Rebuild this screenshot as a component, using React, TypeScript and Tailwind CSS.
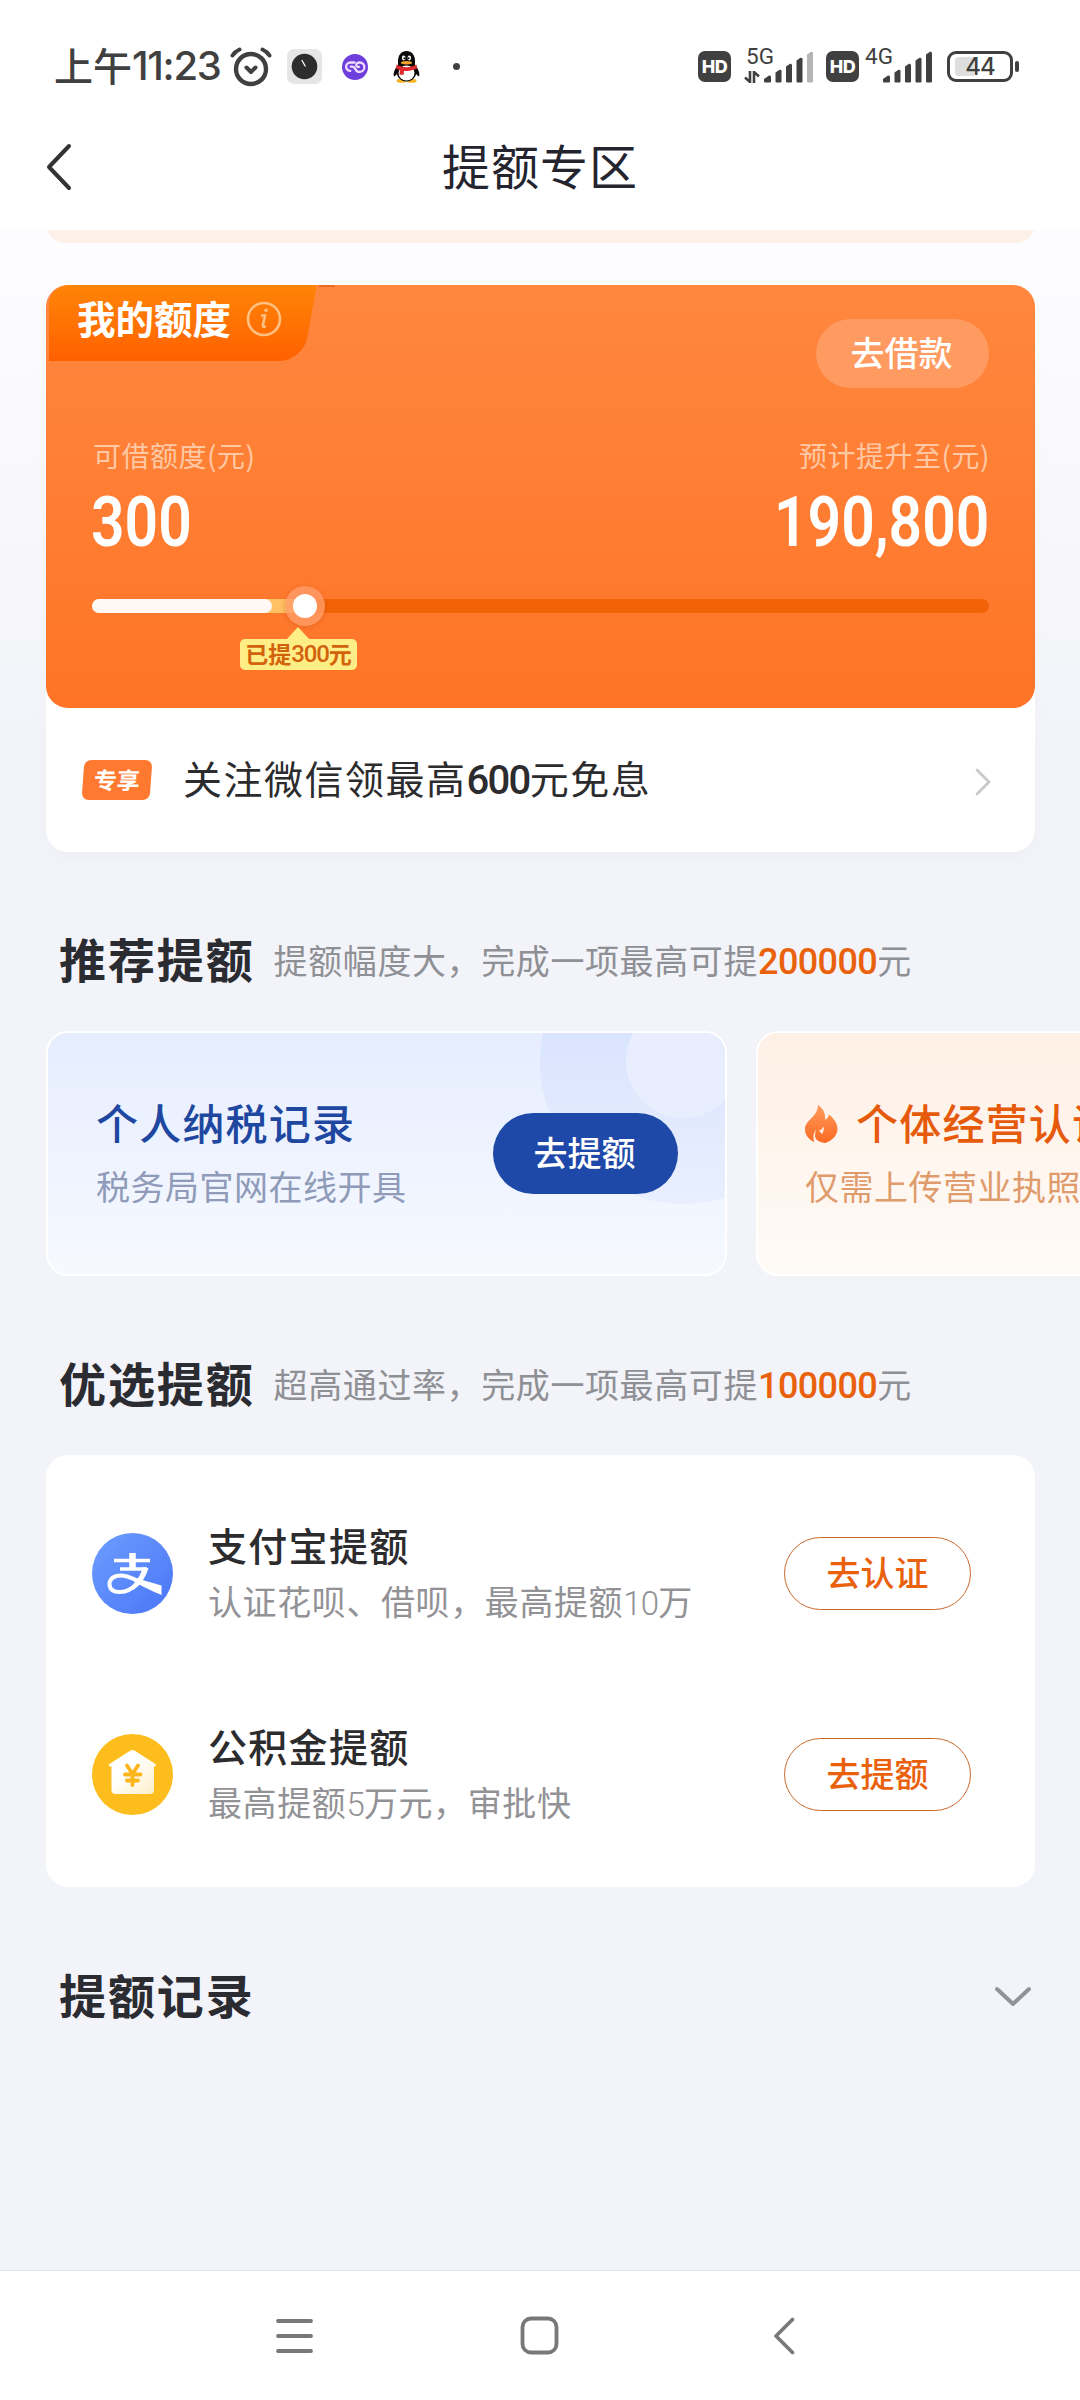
import type { ReactNode } from "react";
import clsx from "clsx";

const offers = [
  { id: "alipay", title: "支付宝提额", desc: ["认证花呗、借呗，最高提额", "10", "万"], action: "去认证" },
  { id: "fund", title: "公积金提额", desc: ["最高提额", "5", "万元，审批快"], action: "去提额" },
];

function AlarmIcon() {
  return (
    <svg width="42" height="40" viewBox="0 0 42 40" fill="none" stroke="#404040" strokeLinecap="round" strokeLinejoin="round">
      <circle cx="21" cy="22" r="15" strokeWidth="4.4" />
      <path d="M16.500 20.500 21 25l4.500-4.500" strokeWidth="4" />
      <path d="M2.500 8.500Q5 4.500 9.500 2.500M39.500 8.500Q37 4.500 32.500 2.500" strokeWidth="4" />
    </svg>
  );
}

function ClockAppIcon() {
  return (
    <svg width="35" height="35" viewBox="0 0 35 35">
      <rect width="35" height="35" rx="7" fill="#e6e6e6" />
      <circle cx="17.500" cy="17.500" r="12.800" fill="#2d2d2d" />
      <path d="M15 11.500l3.200 5.500" stroke="#fff" strokeWidth="1.300" strokeLinecap="round" />
    </svg>
  );
}

function LoopAppIcon() {
  return (
    <svg width="26" height="26" viewBox="0 0 26 26" fill="none">
      <circle cx="13" cy="13" r="13" fill="#6e3fdc" />
      <path
        d="M12.500 8.500H8.300a4.200 4.200 0 0 0 0 8.400M8.800 12.700h1.700c3.300 0 2.500 5.200 6.500 5.200h.700a4.700 4.700 0 0 0 0-9.400c-2.200 0-3.400 1-3.400 2.400s1.200 2 2.700 2"
        stroke="#f0dcff"
        strokeWidth="2.300"
        strokeLinecap="round"
      />
    </svg>
  );
}

function PenguinIcon() {
  return (
    <svg width="27" height="32" viewBox="0 0 27 32">
      <ellipse cx="8.500" cy="29.800" rx="5" ry="2" fill="#f6b323" />
      <ellipse cx="18.500" cy="29.800" rx="5" ry="2" fill="#f6b323" />
      <path d="M5 14C1.500 18 0 22 .8 25c.6 1 2-.5 3-2C5 27.500 9 30.500 13.500 30.500S22 27.500 23.200 23c1 1.500 2.400 3 3 2 .8-3-.700-7-4.200-11z" fill="#0b0b0b" />
      <path d="M5 14.500V10C5 4 8.500 0 13.500 0S22 4 22 10v4.500z" fill="#0b0b0b" />
      <ellipse cx="13.500" cy="22" rx="8" ry="7.500" fill="#fff" />
      <ellipse cx="10.700" cy="7" rx="1.800" ry="2.400" fill="#fff" />
      <ellipse cx="16.300" cy="7" rx="1.800" ry="2.400" fill="#fff" />
      <circle cx="11.400" cy="7.300" r="1" fill="#000" />
      <circle cx="15.600" cy="7.300" r="1" fill="#000" />
      <ellipse cx="13.500" cy="11.800" rx="5.600" ry="1.700" fill="#f6a32b" />
      <path d="M3.600 13.500c6 3.500 14 3.500 19.800 0l.8 3.800c-4.500 2.500-9 3-13.200 2.500l-.3 4H6.500l.4-4.800c-1.500-.4-2.800-1-4-1.800z" fill="#e02a2f" />
    </svg>
  );
}

function HdBadge() {
  return (
    <span className="flex h-[31px] w-[33px] items-center justify-center rounded-[7px] bg-[#404040] font-[Inter,sans-serif] text-[18px] leading-none font-extrabold tracking-[-0.500px] text-white">
      HD
    </span>
  );
}

function SignalBars({ weak = false }: { weak?: boolean }) {
  return (
    <svg width="50" height="32" viewBox="0 0 50 32" fill="#404040">
      <path d="M0 28l5-3.500q2-.5 2 1.500v4.500q0 1-1 1H1q-1 0-1-1z" />
      <path d="M11.500 21.500l4-2.700q2-.5 2 1.500v10.200q0 1-1 1h-4q-1 0-1-1z" />
      <path d="M22 15.500l4-2.700q2-.5 2 1.500v16.200q0 1-1 1h-4q-1 0-1-1z" />
      <path d="M32.500 9.500l4-2.700q2-.5 2 1.500v22.200q0 1-1 1h-4q-1 0-1-1z" />
      <path d="M43 3.500l4-2.700q2-.5 2 1.500v28.200q0 1-1 1h-4q-1 0-1-1z" fill={weak ? "#b5b5b5" : "#404040"} />
    </svg>
  );
}

function StatusBar() {
  return (
    <div className="flex h-[133px] items-center pr-[61px] pl-[54px] text-[#404040]">
      <span className="-mt-[4px] flex w-[170px] items-center text-[39px] leading-none font-medium whitespace-nowrap">
        上午
        <span className="mt-[2px] font-[Inter,sans-serif] text-[40px] tracking-[-1.300px]">11:23</span>
      </span>
      <span className="ml-[6px]"><AlarmIcon /></span>
      <span className="ml-[15px]"><ClockAppIcon /></span>
      <span className="ml-[20px]"><LoopAppIcon /></span>
      <span className="ml-[25px]"><PenguinIcon /></span>
      <span className="ml-[33px] size-[7px] rounded-full bg-[#404040]" />

      <div className="ml-auto flex items-center">
        <HdBadge />
        <div className="relative ml-[33px]">
          <SignalBars weak />
          <span className="absolute -top-[6px] -left-[18px] font-[Roboto,sans-serif] text-[22.500px] leading-none">5G</span>
          <svg className="absolute top-[20px] -left-[20px]" width="16" height="12" viewBox="0 0 16 12" fill="none" stroke="#404040" strokeWidth="2.600">
            <path d="M6 0v11L1 6.500M10 12V1l5 4.500" />
          </svg>
        </div>
        <span className="ml-[12px]"><HdBadge /></span>
        <div className="relative ml-[24px]">
          <SignalBars />
          <span className="absolute -top-[6px] -left-[18px] font-[Roboto,sans-serif] text-[22.500px] leading-none">4G</span>
        </div>
        <div className="relative ml-[14px] flex h-[31px] w-[66px] items-center justify-center rounded-[9px] border-[3px] border-[#404040]">
          <span className="absolute top-[3px] bottom-[3px] left-[5px] w-[19px] rounded-l-[4px] bg-[#dedede]" />
          <span className="relative font-[Inter,sans-serif] text-[24px] leading-none font-medium tracking-[-1px]">44</span>
        </div>
        <span className="ml-[2px] h-[11px] w-[4px] rounded-[2px] bg-[#404040]" />
      </div>
    </div>
  );
}

function Num({ children, className }: { children: ReactNode; className?: string }) {
  return <span className={clsx("font-[Roboto,sans-serif]", className)}>{children}</span>;
}

function CreditCard() {
  return (
    <div className="rounded-[22px] bg-white shadow-[0_8px_16px_rgba(40,40,80,0.02)]">
      <div className="h-[423px] rounded-[22px] bg-linear-to-b from-[#ff873e] to-[#ff7426]">
        <div className="flex h-[103px] items-start justify-between pr-[46px]">
          <div className="relative ml-[3px] flex h-[76px] w-[286px] items-center overflow-hidden rounded-tl-[20px] pb-[8px] pl-[28px]">
            <span className="absolute top-0 left-[270px] h-[2px] w-[16px] bg-[#ea6c20]" />
            <span className="absolute top-0 -left-[20px] h-[76px] w-[281px] -skew-x-[10deg] rounded-br-[24px] bg-linear-to-b from-[#ff8407] to-[#ff6000]" />
            <span className="relative -mt-[4px] text-[38.500px] leading-none font-bold text-white">我的额度</span>
            <svg className="relative ml-[15px]" width="36" height="36" viewBox="0 0 36 36" fill="none" stroke="#ffc081" strokeLinecap="round">
              <circle cx="18" cy="18" r="16" strokeWidth="2.600" />
              <path d="M16 14.500h3l-2.200 10q-.2 1.800 2 1" strokeWidth="2.600" />
              <circle cx="20" cy="9.300" r="1.800" fill="#ffc081" stroke="none" />
            </svg>
          </div>
          <button className="mt-[34px] h-[69px] w-[173px] rounded-full bg-[#ff9a60] pr-[2px] pb-[3px] text-[34px] leading-none font-medium text-white">
            去借款
          </button>
        </div>

        <div className="mt-[47px] flex h-[40px] items-center justify-between pr-[45px] pl-[47px] text-[28px] tracking-[0.500px] text-[#ffc8a4]">
          <span>可借额度(元)</span>
          <span>预计提升至(元)</span>
        </div>
        <div className="mt-[17px] flex h-[60px] items-center justify-between pr-[46px] pl-[45px] text-[70px] leading-none font-semibold text-white">
          <Num className="origin-left scale-x-[0.84]">300</Num>
          <Num className="origin-right scale-x-[0.84]">190,800</Num>
        </div>

        <div className="relative mx-[46px] mt-[47px] h-[14px] rounded-full bg-[#f26207]">
          <div className="h-full w-[212px] rounded-l-full bg-[#ffc163]">
            <div className="h-full w-[180px] rounded-full bg-[#fff8f5]" />
          </div>
          <span className="absolute -top-[13px] left-[193px] size-[40px] rounded-full bg-[#ff9c68]/80 shadow-[0_1px_5px_rgba(180,70,0,0.35)]" />
          <span className="absolute -top-[5px] left-[201px] size-[24px] rounded-full bg-white" />
          <span className="absolute top-[28px] left-[194px] border-x-[12px] border-b-[13px] border-x-transparent border-b-[#ffed86]" />
          <span className="absolute top-[40px] left-[148px] flex h-[31px] w-[117px] items-center justify-center rounded-[5px] bg-[#ffed86] pb-[2px] text-[23px] leading-none font-bold whitespace-nowrap text-[#d2620c]">
            已提<Num className="text-[24px] font-medium tracking-[-1.200px]">300</Num>元
          </span>
        </div>
      </div>

      <div className="flex h-[144px] items-center pr-[44px] pl-[37px]">
        <span className="flex h-[40px] w-[68px] -skew-x-[4deg] items-center justify-center rounded-[7px] bg-[#ff7a30] pb-[2px] text-[23px] leading-none font-bold text-white">
          专享
        </span>
        <p className="ml-[32px] pb-[2px] text-[39px] leading-none tracking-[1.500px] text-[#2c2c2e]">
          关注微信领最高<Num className="text-[40px] font-medium tracking-[-1.700px]">600</Num>元免息
        </p>
        <svg className="ml-auto mt-[3px]" width="16" height="28" viewBox="0 0 16 28" fill="none" stroke="#c9c9cc" strokeWidth="2.800" strokeLinecap="round" strokeLinejoin="round">
          <path d="M2 2l12 12L2 26" />
        </svg>
      </div>
    </div>
  );
}

function SectionHeading({ title, hint, amount }: { title: string; hint: string; amount: string }) {
  return (
    <div className="flex h-[60px] items-center pl-[13px] leading-none whitespace-nowrap">
      <h2 className="-mt-[5px] text-[47px] font-bold tracking-[1.900px] text-[#2b2b32]">{title}</h2>
      <p className="mt-[3px] ml-[19px] text-[34px] tracking-[0.600px] text-[#8f9095]">
        {hint}
        <Num className="text-[36px] font-medium tracking-[-0.600px] text-[#ea610d]">{amount}</Num>元
      </p>
    </div>
  );
}

function RecommendCards() {
  return (
    <div className="mt-[41px] -mr-[45px] flex gap-[29px] overflow-hidden">
      <div className="relative flex h-[245px] w-[681px] shrink-0 items-center justify-between overflow-hidden rounded-[22px] border-[2px] border-white bg-linear-to-b from-[#e6edfe] to-[#f6f9ff] pr-[47px] pl-[48px]">
        <svg className="absolute top-0 right-0" width="189" height="176" viewBox="0 0 189 176">
          <defs>
            <linearGradient id="ring" x1="0" y1="0" x2="0" y2="1">
              <stop offset="0.400" stopColor="#dae4fe" />
              <stop offset="1" stopColor="#e9effe" />
            </linearGradient>
          </defs>
          <circle cx="147" cy="28" r="143" fill="url(#ring)" />
          <circle cx="147" cy="28" r="57" fill="#e8eefe" />
        </svg>
        <div className="mt-[2px] whitespace-nowrap">
          <div className="text-[42px] leading-[62px] font-medium tracking-[1.200px] text-[#20479f]">个人纳税记录</div>
          <div className="text-[34px] leading-[66px] tracking-[0.500px] text-[#8f9bb9]">税务局官网在线开具</div>
        </div>
        <button className="relative h-[81px] w-[185px] rounded-full bg-[#1f49a8] pr-[2px] pb-[4px] text-[34px] leading-none font-medium text-white">
          去提额
        </button>
      </div>

      <div className="flex h-[245px] w-[681px] shrink-0 items-center rounded-[22px] border-[2px] border-white bg-linear-to-b from-[#fef0e5] to-[#fffbf7] pl-[47px]">
        <div className="mt-[2px] whitespace-nowrap">
          <div className="flex items-center text-[42px] leading-[62px] font-medium tracking-[1.200px] text-[#e65a0b]">
            <svg className="mt-[5px] mr-[18px]" width="33" height="38" viewBox="0 0 33 38">
              <defs>
                <linearGradient id="flame" x1="0" y1="0" x2="0" y2="1">
                  <stop stopColor="#ff9a5c" />
                  <stop offset="1" stopColor="#fb6a22" />
                </linearGradient>
              </defs>
              <path
                d="M13 0c6 4 7.500 9 7 15 2-1 3.500-3 4-5.500 5 4 8.500 9 8.500 14.500 0 6-4.500 11-12 14-6-.5-10.500-3-10.500-7.500 0-2 .4-4 1-6-2.500 3.500-3.500 8-1.500 12.500C3.500 34.500 0 30 0 24 0 15 12.500 12.500 13 0z"
                fill="url(#flame)"
              />
              <path d="M18.500 21.500c1 3.500-.5 5.500-1.500 8-.8-1.800-1.800-2.800-3.500-3.500 2-1 4-2.500 5-4.500z" fill="#fef0e7" />
            </svg>
            个体经营认证
          </div>
          <div className="text-[34px] leading-[66px] tracking-[0.500px] text-[#e09b6c]">仅需上传营业执照</div>
        </div>
      </div>
    </div>
  );
}

function AlipayIcon() {
  return (
    <svg width="81" height="81" viewBox="0 0 81 81" fill="none">
      <defs>
        <linearGradient id="alipay" x1="0" y1="0" x2="1" y2="1">
          <stop stopColor="#6d9dff" />
          <stop offset="1" stopColor="#4a76f6" />
        </linearGradient>
      </defs>
      <circle cx="40.500" cy="40.500" r="40.500" fill="url(#alipay)" />
      <path d="M22 27.500h36M28 36h27" stroke="#fff" strokeWidth="3.600" />
      <path d="M40.500 20v16" stroke="#fff" strokeWidth="6.500" />
      <path d="M53.500 34.500C50 45 42 59 28 59c-7.500 0-10.500-3.500-10.500-8 0-5 4.500-8.500 11-8.500 8 0 14 4 22 7.500" stroke="#fff" strokeWidth="4" />
      <path d="M45 45.500l24.500 7V62C62 59 52 54 42 49z" fill="#fff" />
      <path d="M56.500 35C54 44 48 53 41 57l-1.500-3C45 49 49 41 50.500 35z" fill="#fff" />
    </svg>
  );
}

function FundIcon() {
  return (
    <svg width="81" height="81" viewBox="0 0 81 81" fill="none">
      <defs>
        <linearGradient id="house" x1="0" y1="0" x2="1" y2="1">
          <stop offset="0.400" stopColor="#fff" />
          <stop offset="1" stopColor="#ffeec6" />
        </linearGradient>
      </defs>
      <circle cx="40.500" cy="40.500" r="40.500" fill="#fdbd1d" />
      <path d="M38.500 16.500q2-1.200 4 0L63.500 30q1.500 2-1 2.500h-.500V56q0 4-4 4H23.500q-4 0-4-4V32.500h-1q-3-.5-1-2.500z" fill="url(#house)" />
      <path d="M35 31.500l5.500 8.500 5.500-8.500M40.500 40v11M33 40.500h15.500M35 46.500h11" stroke="#fdb51c" strokeWidth="3.800" strokeLinecap="round" />
    </svg>
  );
}

function OfferList() {
  return (
    <div className="mt-[41px] h-[432px] rounded-[22px] bg-white pt-[18px] pr-[64px] pl-[46px]">
      {offers.map((o) => (
        <div key={o.id} className="flex h-[201px] items-center whitespace-nowrap">
          {o.id === "alipay" ? <AlipayIcon /> : <FundIcon />}
          <div className="mt-[2px] ml-[35px]">
            <div className="text-[39px] leading-[56px] font-medium tracking-[1.300px] text-[#2c2c2f]">{o.title}</div>
            <div className="text-[34px] leading-[58px] tracking-[0.600px] text-[#929296]">
              {o.desc[0]}
              <Num className="text-[33px] font-light tracking-[-0.800px]">{o.desc[1]}</Num>
              {o.desc[2]}
            </div>
          </div>
          <button className="ml-auto h-[73px] w-[187px] rounded-full border border-[#c9692c] pb-[4px] text-[34px] leading-none font-medium text-[#ea610d]">
            {o.action}
          </button>
        </div>
      ))}
    </div>
  );
}

export default function App() {
  return (
    <div className="flex h-[2400px] w-[1080px] flex-col overflow-hidden bg-white font-['Noto_Sans_CJK_SC',sans-serif]">
      <StatusBar />
      <header className="mb-[30px] flex h-[67px] items-center justify-between px-[45px]">
        <svg width="28" height="48" viewBox="0 0 28 48" fill="none" stroke="#333" strokeWidth="4" strokeLinecap="round" strokeLinejoin="round">
          <path d="M24 3L4 24l20 21" />
        </svg>
        <h1 className="-mt-[6px] text-[48px] leading-none tracking-[1px] text-[#24242e]">提额专区</h1>
        <div className="w-[28px]" />
      </header>

      <main className="h-[2040px] bg-linear-to-b from-[#fdfdff] to-[#f3f4f9] to-25% pr-[45px] pl-[46px]">
        <div className="h-[13px] overflow-hidden">
          <div className="-mt-[10px] h-[23px] rounded-b-[20px] bg-[#fdf0e6]" />
        </div>
        <div className="mt-[42px]">
          <CreditCard />
        </div>
        <div className="mt-[78px]">
          <SectionHeading title="推荐提额" hint="提额幅度大，完成一项最高可提" amount="200000" />
        </div>
        <RecommendCards />
        <div className="mt-[78px]">
          <SectionHeading title="优选提额" hint="超高通过率，完成一项最高可提" amount="100000" />
        </div>
        <OfferList />
        <div className="mt-[79px] flex h-[60px] items-center justify-between pl-[13px]">
          <h2 className="-mt-[6px] text-[47px] leading-none font-bold tracking-[1.900px] text-[#2b2b32]">提额记录</h2>
          <svg className="mt-[2px]" width="44" height="24" viewBox="0 0 44 24" fill="none" stroke="#909398" strokeWidth="4" strokeLinecap="round" strokeLinejoin="round">
            <path d="M6 4l16 15L38 4" />
          </svg>
        </div>
      </main>

      <nav className="flex h-[130px] items-center border-t border-[#e2e5e9] pl-[275px]">
        <svg width="39" height="34" viewBox="0 0 39 34" stroke="#787878" strokeWidth="3.800" strokeLinecap="round">
          <path d="M3 2h33M3 17h33M3 32h33" />
        </svg>
        <svg className="ml-[206px]" width="39" height="39" viewBox="0 0 39 39" fill="none" stroke="#787878" strokeWidth="3.800">
          <rect x="2.500" y="2.500" width="34" height="34" rx="8.500" />
        </svg>
        <svg className="ml-[213px]" width="24" height="38" viewBox="0 0 24 38" fill="none" stroke="#787878" strokeWidth="3.600" strokeLinecap="round" strokeLinejoin="round">
          <path d="M20.500 2.500L4 19l16.500 16.500" />
        </svg>
      </nav>
    </div>
  );
}
